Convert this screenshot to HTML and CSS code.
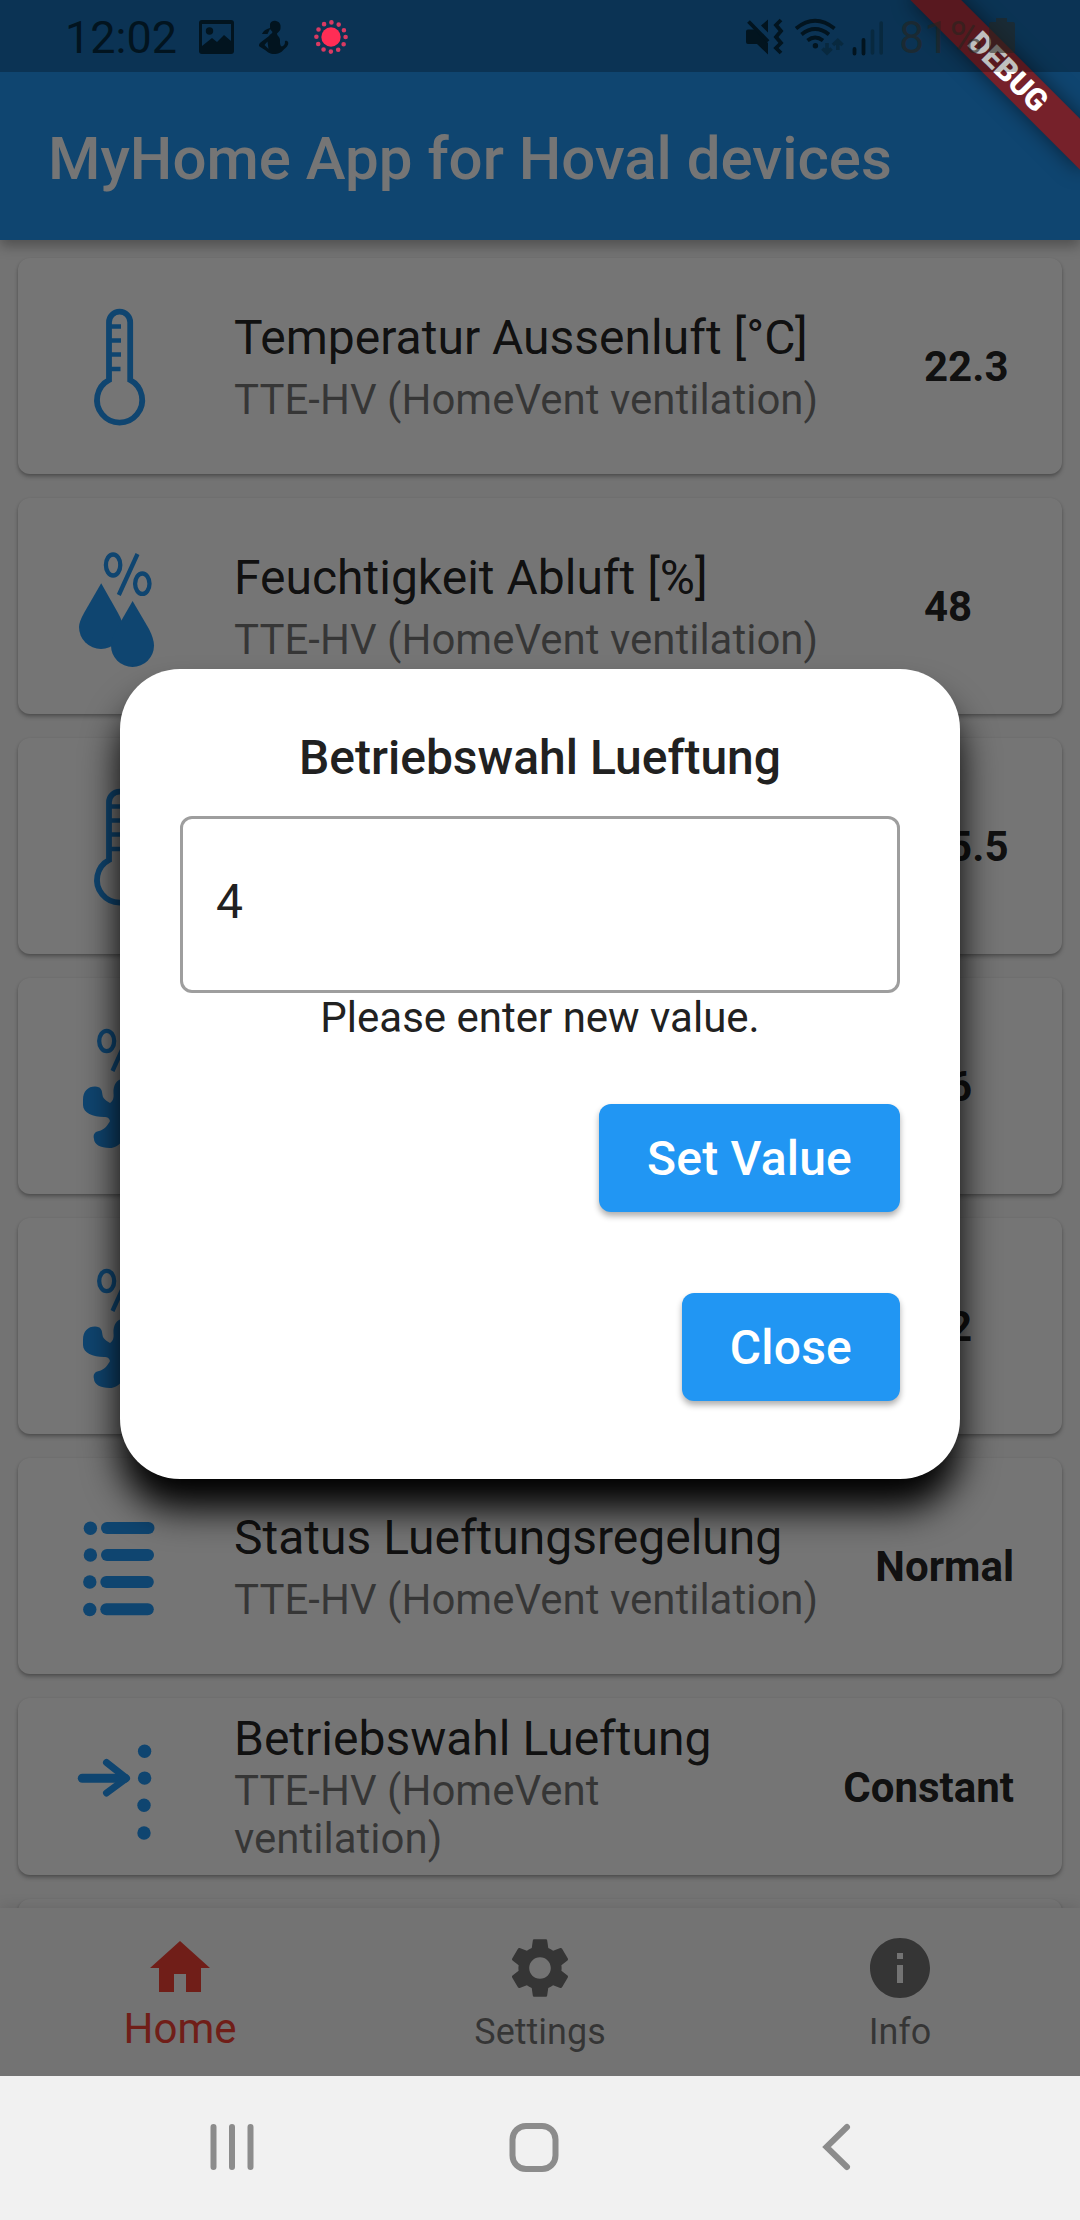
FILE: index.html
```html
<!DOCTYPE html>
<html lang="de">
<head>
<meta charset="utf-8">
<title>MyHome App for Hoval devices</title>
<link rel="stylesheet" href="styles.css">
</head>
<body>
<div class="app">
  <header class="appbar"><h1>MyHome App for Hoval devices</h1></header>

  <main class="list">
    <article class="card">
      <svg class="icon" viewBox="60 33 120 150">
        <path class="line" d="M109 122V64.2a10.6 10.6 0 0 1 21.2 0V122A22.6 22.6 0 1 1 109 122Z"/>
        <path class="tick" d="M110 68.6h11M110 82.6h11M110 96.6h11M110 111h10.500"/>
      </svg>
      <div class="info"><h2>Temperatur Aussenluft [°C]</h2><p>TTE-HV (HomeVent ventilation)</p></div>
      <strong class="value">22.3</strong>
    </article>
    <article class="card">
      <svg class="icon" viewBox="60 33 120 150">
        <g class="pct"><ellipse cx="113.1" cy="67" rx="7.2" ry="10.500"/><ellipse cx="142.3" cy="85.700" rx="7.200" ry="10.200"/><path d="M137.500 56L118.800 97"/></g>
        <path class="solid" d="M101.200 85.300L118 115Q123 124 123 129A22 22 0 0 1 79 129Q79 124 84 115Z"/>
        <path class="solid" d="M132.600 103L149 131Q154 141 154 147.500A21.500 21.500 0 0 1 111 147.500Q111 141 116.500 131Z"/>
      </svg>
      <div class="info"><h2>Feuchtigkeit Abluft [%]</h2><p>TTE-HV (HomeVent ventilation)</p></div>
      <strong class="value">48</strong>
    </article>
    <article class="card">
      <svg class="icon" viewBox="60 33 120 150">
        <path class="line" d="M109 122V64.2a10.6 10.6 0 0 1 21.2 0V122A22.6 22.6 0 1 1 109 122Z"/>
        <path class="tick" d="M110 68.6h11M110 82.6h11M110 96.6h11M110 111h10.500"/>
      </svg>
      <div class="info"></div>
      <strong class="value">25.5</strong>
    </article>
    <article class="card">
      <svg class="icon" viewBox="60 33 120 150">
        <g class="pct"><ellipse cx="106.700" cy="63" rx="7.500" ry="10.200"/><ellipse cx="136" cy="81.700" rx="7.200" ry="10.200"/><path d="M131 52L112.500 93"/></g>
        <path class="solid" d="M83 122C83 113 88 108.500 95 108.500C101 108.500 102 112 102.500 117C103 121 107 123 110 125C113 123 114 120 113.500 115C113 107 117 101 123 101C134 101 136 115 127 126C136 122 152 112 155 124C157 136 141 139 131 137C139 144 148 150 144 159C139 167 129 158 122 148C128 160 119 170 110 170C100 170 94 166 94 161C93 157 94 154 99 153C104 152 108 147 110 143C109 140 108 139 104 139C93 139 83 135 83 127Z"/>
      </svg>
      <div class="info"></div>
      <strong class="value">46</strong>
    </article>
    <article class="card">
      <svg class="icon" viewBox="60 33 120 150">
        <g class="pct"><ellipse cx="106.700" cy="63" rx="7.500" ry="10.200"/><ellipse cx="136" cy="81.700" rx="7.200" ry="10.200"/><path d="M131 52L112.500 93"/></g>
        <path class="solid" d="M83 122C83 113 88 108.500 95 108.500C101 108.500 102 112 102.500 117C103 121 107 123 110 125C113 123 114 120 113.500 115C113 107 117 101 123 101C134 101 136 115 127 126C136 122 152 112 155 124C157 136 141 139 131 137C139 144 148 150 144 159C139 167 129 158 122 148C128 160 119 170 110 170C100 170 94 166 94 161C93 157 94 154 99 153C104 152 108 147 110 143C109 140 108 139 104 139C93 139 83 135 83 127Z"/>
      </svg>
      <div class="info"></div>
      <strong class="value">42</strong>
    </article>
    <article class="card">
      <svg class="icon" viewBox="60 33 120 150">
        <g class="solid"><circle cx="90.400" cy="70.200" r="6.700"/><circle cx="90.400" cy="97" r="6.700"/><circle cx="89.800" cy="124" r="6.700"/><circle cx="89.800" cy="151.500" r="6.700"/>
        <rect x="101" y="64" width="53.500" height="12" rx="6"/><rect x="101" y="91" width="53" height="12" rx="6"/><rect x="100.300" y="118" width="53.500" height="12" rx="6"/><rect x="100.300" y="145.200" width="53.500" height="12" rx="6"/></g>
      </svg>
      <div class="info"><h2>Status Lueftungsregelung</h2><p>TTE-HV (HomeVent ventilation)</p></div>
      <strong class="value">Normal</strong>
    </article>
    <article class="card compact">
      <svg class="icon" viewBox="60 13.500 120 150">
        <g class="solid"><circle cx="144.600" cy="52.700" r="6.700"/><circle cx="144.600" cy="79.600" r="6.700"/><circle cx="144" cy="106.700" r="6.700"/><circle cx="144" cy="134.500" r="6.700"/></g>
        <path class="arrow" d="M82.300 79.800H125"/><path class="arrow head" d="M106.500 64L126.500 79.800L106.500 94.500"/>
      </svg>
      <div class="info"><h2>Betriebswahl Lueftung</h2><p>TTE-HV (HomeVent ventilation)</p></div>
      <strong class="value">Constant</strong>
    </article>
    <article class="card"></article>
  </main>

  <nav class="tabs">
    <a class="tab active"><svg viewBox="0 0 24 24"><path d="M10 20v-6h4v6h5v-8h3L12 3 2 12h3v8z"/></svg><span>Home</span></a>
    <a class="tab"><svg viewBox="0 0 24 24"><path d="M19.140 12.940c.04-.3.06-.61.06-.94 0-.32-.02-.64-.07-.94l2.030-1.580c.18-.14.23-.41.12-.61l-1.920-3.320c-.12-.22-.37-.29-.59-.22l-2.390.96c-.5-.38-1.030-.7-1.620-.94l-.36-2.540c-.04-.24-.24-.41-.48-.41h-3.840c-.24 0-.43.17-.47.41l-.36 2.540c-.59.24-1.130.57-1.620.94l-2.390-.96c-.22-.08-.47 0-.59.22L2.740 8.870c-.12.21-.08.47.12.61l2.030 1.580c-.05.3-.09.63-.09.94s.02.64.07.94l-2.030 1.580c-.18.14-.23.41-.12.61l1.920 3.320c.12.22.37.29.59.22l2.390-.96c.5.38 1.030.7 1.620.94l.36 2.540c.05.24.24.41.48.41h3.840c.24 0 .44-.17.47-.41l.36-2.540c.59-.24 1.130-.56 1.620-.94l2.390.96c.22.08.47 0 .59-.22l1.920-3.320c.12-.22.07-.47-.12-.61l-2.010-1.580zM12 15.600c-1.980 0-3.600-1.620-3.600-3.600s1.620-3.600 3.600-3.600 3.600 1.620 3.600 3.600-1.620 3.600-3.600 3.600z"/></svg><span>Settings</span></a>
    <a class="tab"><svg viewBox="0 0 24 24"><path d="M12 2C6.480 2 2 6.480 2 12s4.480 10 10 10 10-4.480 10-10S17.520 2 12 2zm1 15h-2v-6h2v6zm0-8h-2V7h2v2z"/></svg><span>Info</span></a>
  </nav>

  <div class="scrim">
    <section class="dialog" role="dialog">
      <h2>Betriebswahl Lueftung</h2>
      <div class="field">4</div>
      <p>Please enter new value.</p>
      <button class="btn">Set Value</button>
      <button class="btn">Close</button>
    </section>
  </div>

  <div class="banner">DEBUG</div>

  <div class="status">
    <span class="clock">12:02</span>
    <svg class="left" width="160" height="72" viewBox="195 0 160 72">
      <path class="ink" fill-rule="evenodd" d="M202 20h29a3 3 0 0 1 3 3v28a3 3 0 0 1-3 3h-29a3 3 0 0 1-3-3V23a3 3 0 0 1 3-3zM202 24V46L212 38L217 42L224 35L231 41V24Z"/>
      <circle class="ink" cx="209.500" cy="31" r="3.700"/>
      <path class="ink" fill-rule="evenodd" d="M270 24C271 21 274 20.500 276 21C280 22 281 25 280.500 28C280.500 31 278 32 277 33.500C277 36 280 37 280 40C280 43 280 46 282 46.500C284 46 285 44 285 42C284.500 41 286 40.500 287 41C289 42 288.500 45 286.500 47C283 50 281 54 275 54C269 54 268 52 265 50L259.500 46.500C258.500 45.500 259 44 260.500 42.500L269 36C270 34 272 34 272.500 32L270 29L267.500 34L262 34C263 31 266 29 270 28ZM264.500 45L268.500 49L267.500 41.500Z"/>
      <circle cx="331" cy="37" r="9.700" fill="#ff2d55"/>
      <circle cx="331" cy="37" r="14.600" fill="none" stroke="#d93a62" stroke-width="4.600" stroke-linecap="round" stroke-dasharray="0 7.645"/>
    </svg>
    <svg class="right" width="150" height="72" viewBox="740 0 150 72">
      <path class="ink" d="M746 31.500q0-2 2-2h6L768 43V54.500L757 44h-9q-2 0-2-2zM761 25.500L768 19.500V32.500Z"/>
      <path class="wire" d="M748.500 21.500L768 41.500"/>
      <path class="wire" d="M781 20L776 25L781 31L776 37L781 43L776 48L781 53"/>
      <path class="wire" d="M796 28.500Q815 13 834.500 28.500M801.500 34.500Q815 23.500 829 34.500M807.500 40.500Q815 34.500 823 40.500"/>
      <circle class="ink" cx="815.400" cy="45.800" r="2.700"/>
      <path class="dim" d="M827 43v9M822.500 48.500L827 53L831.500 48.500M837.800 50V41M833 45L837.800 40.500L842.500 45"/>
      <path class="wire" stroke-linecap="round" d="M854.500 49v4.500M863.500 40v13.500"/>
      <path class="dim" stroke-linecap="round" d="M872.500 31v22M881.200 23v30"/>
    </svg>
    <span class="percent">81%</span>
    <svg class="battery" width="28" height="36" viewBox="0 0 28 36"><path d="M8 0h11v4h6q2 0 2 2v27q0 2-2 2H3q-2 0-2-2V6q0-2 2-2h5z"/></svg>
  </div>
</div>

<footer class="sysnav">
  <svg width="1080" height="144" viewBox="0 0 1080 144">
    <path d="M213.500 51v40M232 51v40M250.500 51v40"/>
    <rect x="512.500" y="50" width="43" height="43" rx="13.500"/>
    <path d="M847 51L826.500 71L847 91"/>
  </svg>
</footer>
</body>
</html>
```
FILE: styles.css
```css
* { box-sizing: border-box; margin: 0; padding: 0; }
body {
  width: 1080px;
  height: 2220px;
  overflow: hidden;
  font-family: Roboto, "Liberation Sans", sans-serif;
  background: #f1f1f1;
}
.app {
  position: relative;
  display: flex;
  flex-direction: column;
  height: 2076px;
  overflow: hidden;
  background: #fafafa;
}

.appbar {
  position: relative;
  z-index: 1;
  flex: none;
  height: 240px;
  padding: 77px 48px 0;
  display: flex;
  align-items: center;
  background: #2196f3;
  box-shadow: 0 6px 12px rgba(0, 0, 0, .3);
}
.appbar h1 { font-size: 60px; font-weight: 500; line-height: 72px; color: #fff; white-space: nowrap; }

.list {
  flex: 1;
  min-height: 0;
  overflow: hidden;
  display: flex;
  flex-direction: column;
  gap: 24px;
  padding: 18px 18px 0;
}
.card {
  flex: none;
  height: 216px;
  display: flex;
  align-items: center;
  padding: 0 48px 0 42px;
  border-radius: 12px;
  background: #fff;
  box-shadow: 0 3px 4px rgba(0, 0, 0, .24), 0 1px 3px rgba(0, 0, 0, .14);
}
.card.compact { height: 177px; }
.icon { flex: none; width: 120px; height: 150px; margin-right: 54px; }
.icon .line { fill: none; stroke: #2196f3; stroke-width: 5.8; }
.icon .tick { fill: none; stroke: #2196f3; stroke-width: 4.5; }
.icon .pct { fill: none; stroke: #2196f3; stroke-width: 4.3; }
.icon .solid { fill: #2196f3; }
.icon .arrow { fill: none; stroke: #2196f3; stroke-width: 9; stroke-linecap: round; stroke-linejoin: round; }
.icon .head { stroke-width: 7; }

.info { flex: 1; min-width: 0; padding-top: 2px; }
.info h2 { font-size: 48px; font-weight: 400; line-height: 56px; color: rgba(0, 0, 0, .87); white-space: nowrap; }
.info p { margin-top: 10px; font-size: 42px; line-height: 48px; color: rgba(0, 0, 0, .54); }
.compact .info { padding-top: 0; }
.compact .info p { margin-top: 0; }
.value { min-width: 90px; margin-left: 48px; padding-top: 2px; font-size: 42px; font-weight: 700; line-height: 48px; color: rgba(0, 0, 0, .87); }
.card:not(.compact) .info p { white-space: nowrap; }

.tabs {
  flex: none;
  height: 168px;
  display: flex;
  background: #fafafa;
  box-shadow: 0 -3px 12px rgba(0, 0, 0, .1);
}
.tab {
  flex: 1;
  display: flex;
  flex-direction: column;
  align-items: center;
  padding-top: 24px;
  font-size: 36px;
  color: rgba(0, 0, 0, .54);
}
.tab svg { width: 72px; height: 72px; fill: #737373; }
.tab span { margin-top: 7px; line-height: 42px; }
.tab.active { color: #f44336; font-size: 42px; }
.tab.active svg { fill: #f44336; }
.tab.active span { margin-top: 1px; line-height: 48px; }

.scrim {
  position: absolute;
  inset: 0;
  z-index: 2;
  display: flex;
  justify-content: center;
  align-items: flex-start;
  padding-top: 669px;
  background: rgba(0, 0, 0, .54);
}
.dialog {
  width: 840px;
  height: 810px;
  padding: 60px;
  display: flex;
  flex-direction: column;
  align-items: flex-end;
  border-radius: 60px;
  background: #fff;
  box-shadow: 0 30px 37px #000;
  color: #212121;
}
.dialog h2 { align-self: center; font-size: 48px; font-weight: 500; line-height: 57px; }
.field {
  align-self: stretch;
  height: 177px;
  margin-top: 30px;
  padding: 0 33px;
  border: 3px solid #9e9e9e;
  border-radius: 12px;
  font-size: 48px;
  line-height: 165px;
}
.dialog p { align-self: center; padding-top: 1px; font-size: 42px; line-height: 48px; }
.btn {
  height: 108px;
  padding: 1px 48px 0;
  border: 0;
  border-radius: 12px;
  background: #2196f3;
  box-shadow: 0 4px 6px rgba(0, 0, 0, .32);
  font: 500 48px/107px Roboto, "Liberation Sans", sans-serif;
  letter-spacing: .2px;
  color: #fff;
}
.dialog p + .btn { margin-top: 62px; }
.btn + .btn { margin-top: 81px; }

/* Debug ribbon pinned across the top right corner */
.banner {
  position: absolute;
  z-index: 3;
  top: 84px;
  left: 960px;
  width: 240px;
  height: 36px;
  transform: rotate(45deg);
  transform-origin: 120px -84px;
  background: #76212a;
  box-shadow: 0 0 20px rgba(0, 0, 0, .5);
  font-size: 30.6px;
  font-weight: 900;
  line-height: 36px;
  text-align: center;
  color: #fff;
}

.status {
  position: absolute;
  z-index: 4;
  inset: 0 0 auto 0;
  height: 72px;
  display: flex;
  align-items: center;
  padding-left: 65px;
  background: rgba(0, 0, 0, .25);
  font-size: 45px;
  line-height: 72px;
  color: #02141f;
}
.clock { width: 130px; padding-top: 4px; }
.left { margin-right: 385px; }
.status svg { flex: none; }
.ink { fill: #02141f; }
.wire { fill: none; stroke: #02141f; stroke-width: 3.8; }
.dim { fill: none; stroke: #08293f; stroke-width: 3.6; }
.percent { width: 97px; margin-left: 9px; padding-top: 4px; color: rgba(38, 36, 30, .6); }
.battery { margin-left: -8px; fill: rgba(38, 36, 30, .55); }

.sysnav { height: 144px; background: #f1f1f1; }
.sysnav svg { display: block; fill: none; stroke: #8c8c8c; stroke-width: 6; stroke-linecap: round; }
```
